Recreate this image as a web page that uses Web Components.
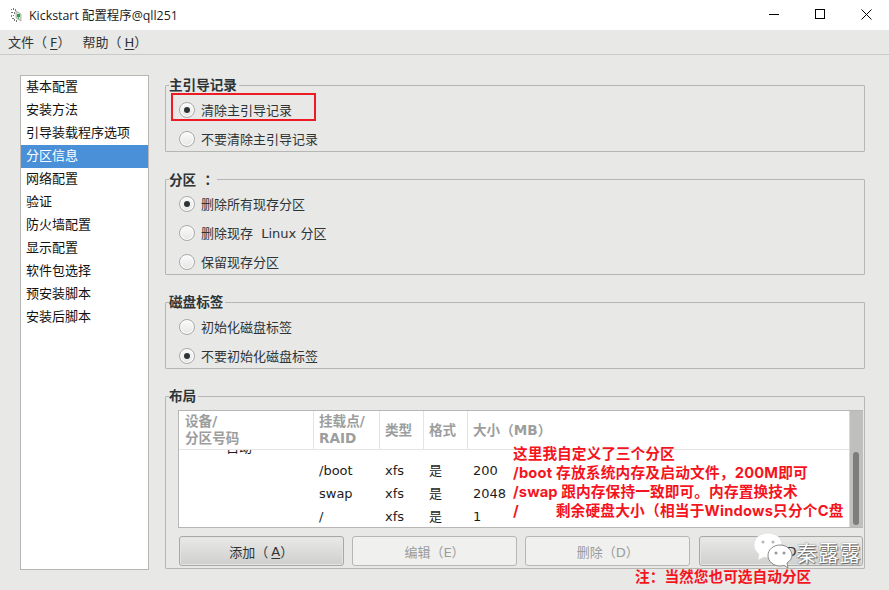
<!DOCTYPE html>
<html>
<head>
<meta charset="utf-8">
<title>Kickstart</title>
<style>
  html, body { margin: 0; padding: 0; }
  body {
    width: 889px;
    height: 590px;
    overflow: hidden;
    background: #e8e8e7;
    font-family: "DejaVu Sans", "Noto Sans CJK SC", sans-serif;
    font-size: 13px;
    color: #2e3436;
  }
  .tc { font-family: "Noto Sans CJK TC", sans-serif; }
</style>
</head>
<body>
<ks-window>
  <ks-sidebar slot="side" selected="3" items="基本配置,安装方法,引导装载程序选项,分区信息,网络配置,验证,防火墙配置,显示配置,软件包选择,预安装脚本,安装后脚本"></ks-sidebar>

  <ks-frame class="a">
    <span slot="legend">主引导记录</span>
    <ks-radio checked>清除主引导记录</ks-radio>
    <ks-radio>不要清除主引导记录</ks-radio>
  </ks-frame>
  <ks-frame class="b">
    <span slot="legend">分区 <span class="tc">：</span></span>
    <ks-radio checked>删除所有现存分区</ks-radio>
    <ks-radio>删除现存&nbsp; Linux 分区</ks-radio>
    <ks-radio>保留现存分区</ks-radio>
  </ks-frame>
  <ks-frame class="c">
    <span slot="legend">磁盘标签</span>
    <ks-radio>初始化磁盘标签</ks-radio>
    <ks-radio checked>不要初始化磁盘标签</ks-radio>
  </ks-frame>
  <ks-frame class="d">
    <span slot="legend">布局</span>
    <ks-layout></ks-layout>
  </ks-frame>
</ks-window>
<ks-notes></ks-notes>

<script>
function defineSimple(name, html, setup) {
  customElements.define(name, class extends HTMLElement {
    constructor() {
      super();
      this.attachShadow({ mode: "open" });
      this.shadowRoot.innerHTML = html;
    }
    connectedCallback() {
      if (setup) setup(this);
    }
  });
}

defineSimple("ks-titlebar", /*html*/ `
  <style>
    :host {
      display: flex;
      align-items: center;
      height: 30px;
      background: #fff;
      color: #1a1a1a;
      font-family: "Open Sans", "Noto Sans CJK SC", sans-serif;
      font-size: 12.4px;
      white-space: nowrap;
    }
    svg.app { margin-left: 10px; margin-right: 7px; flex: none; }
    .title { flex: 1; }
    .ctl { width: 46px; height: 28px; padding-bottom: 2px; display: flex; align-items: center; justify-content: center; }
  </style>
  <svg class="app" width="12" height="16" viewBox="0 0 12 16">
    <path d="M1 2h1v1H1zM3 1h1v2H3zM5 2h1v2H5zM1 5h2v1H1zM4 5h1v2H4zM1 8h1v2H1zM3 8h1v1H3zM2 11h2v1H2zM4 12h1v2H4zM6 13h1v2H6z" fill="#777"/>
    <path d="M6 4l5 3v7l-5-3z" fill="#d6ded6" stroke="#8a8f8a" stroke-width=".6"/>
    <path d="M7 7h3v3H7z" fill="#2f9e44"/>
    <path d="M8 10h1v2H8z" fill="#5bb56a"/>
  </svg>
  <span class="title">Kickstart 配置程序@qll251</span>
  <div class="ctl">
    <svg width="10" height="10"><path d="M0 5.500h10" stroke="#000"/></svg>
  </div>
  <div class="ctl">
    <svg width="10" height="10"><rect x=".5" y=".5" width="9" height="9" fill="none" stroke="#000"/></svg>
  </div>
  <div class="ctl">
    <svg width="11" height="11"><path d="M.5.5l10 10M10.500.5l-10 10" stroke="#000" fill="none"/></svg>
  </div>
`);

defineSimple("ks-menubar", /*html*/ `
  <style>
    :host {
      display: flex;
      align-items: center;
      gap: 12px;
      height: 23px;
      padding: 0 0 1px 8px;
      border-bottom: 1px solid #c9c9c7;
      color: #2e3436;
      font-size: 13px;
      white-space: nowrap;
    }
    u { text-underline-offset: 2px; margin-left: 3px; }
  </style>
  <span>文件（<u>F</u>）</span>
  <span>帮助（<u>H</u>）</span>
`);

defineSimple("ks-window", /*html*/ `
  <style>
    :host { display: block; }
    .body {
      display: flex;
      gap: 16px;
      padding: 20px 24px 0 20px;
    }
    .main {
      flex: 1;
      min-width: 0;
      display: flex;
      flex-direction: column;
    }
    ::slotted(ks-frame.a) { height: 67px; margin-top: 10px; }
    ::slotted(ks-frame.b) { height: 96px; margin-top: 27px; }
    ::slotted(ks-frame.c) { height: 67px; margin-top: 27px; }
    ::slotted(ks-frame.d) { height: 173px; margin-top: 27px; }
  </style>
  <ks-titlebar></ks-titlebar>
  <ks-menubar></ks-menubar>
  <div class="body">
    <slot name="side"></slot>
    <div class="main"><slot></slot></div>
  </div>
`);

defineSimple("ks-sidebar", /*html*/ `
  <style>
    :host {
      display: block;
      flex: none;
      box-sizing: border-box;
      width: 129px;
      height: 495px;
      background: #fff;
      border: 1px solid #b6b6b4;
      color: #111;
      font-size: 13px;
    }
    .row {
      height: 23px;
      line-height: 22px;
      padding-left: 5px;
      white-space: nowrap;
    }
    .row.sel { background: #4a90d9; color: #fff; }
  </style>
  <div class="list"></div>
`, (el) => {
  const list = el.shadowRoot.querySelector(".list");
  const selected = Number(el.getAttribute("selected"));
  el.getAttribute("items").split(",").forEach((text, i) => {
    const row = document.createElement("div");
    row.className = i === selected ? "row sel" : "row";
    row.textContent = text;
    list.append(row);
  });
});

defineSimple("ks-frame", /*html*/ `
  <style>
    :host {
      display: block;
      box-sizing: border-box;
      position: relative;
      border: 1px solid #b6b6b4;
      border-radius: 1px;
      padding: 12px 12px 0 13px;
    }
    .legend {
      position: absolute;
      left: 3px;
      top: -10px;
      padding: 0 2px 0 0;
      height: 18px;
      line-height: 18px;
      background: #e8e8e7;
      font-weight: bold;
      font-size: 13.6px;
      color: #2e3436;
      white-space: nowrap;
    }
    .items { display: flex; flex-direction: column; gap: 6px; }
  </style>
  <div class="legend"><slot name="legend"></slot></div>
  <div class="items"><slot></slot></div>
`);

defineSimple("ks-radio", /*html*/ `
  <style>
    :host {
      display: flex;
      align-items: center;
      gap: 6px;
      height: 23px;
      color: #2e3436;
      font-size: 13px;
      white-space: nowrap;
    }
    .dot {
      flex: none;
      box-sizing: border-box;
      width: 16px;
      height: 16px;
      border-radius: 50%;
      border: 1px solid #a9a9a6;
      background: linear-gradient(#fbfbfb, #e6e6e5);
      box-shadow: inset 0 0 0 1px #fff;
      display: flex;
      align-items: center;
      justify-content: center;
    }
    :host([checked]) .dot::after {
      content: "";
      width: 6px;
      height: 6px;
      border-radius: 50%;
      background: #2e3436;
    }
  </style>
  <span class="dot"></span><span><slot></slot></span>
`);

defineSimple("ks-button", /*html*/ `
  <style>
    :host {
      display: flex;
      align-items: center;
      justify-content: center;
      box-sizing: border-box;
      width: 164.600px;
      height: 30px;
      border: 1px solid #b6b6b4;
      border-radius: 3px;
      background: #f0f0ef;
      color: #9a9c9c;
      font-size: 13px;
      white-space: nowrap;
    }
    :host([active]) {
      color: #2e3436;
      background: linear-gradient(#e9e9e8, #cfcfcd);
      border-color: #a8a8a6;
      box-shadow: inset 0 0 0 1px #e4e4e3;
    }
  </style>
  <slot></slot>
`);

defineSimple("ks-layout", /*html*/ `
  <style>
    :host {
      display: block;
      margin: 1px -12px 0 -1px;
      font-size: 13px;
    }
    .box {
      display: flex;
      box-sizing: border-box;
      height: 118px;
      margin-right: 1px;
      border: 1px solid #b6b6b4;
      border-right: none;
      background: #fff;
    }
    .table { flex: 1; min-width: 0; display: flex; flex-direction: column; }
    .head, .row {
      display: grid;
      grid-template-columns: 135px 66px 44px 44px 1fr;
    }
    .head {
      height: 38px;
      border-bottom: 1px solid #e4e4e3;
      color: #9c9e9e;
      font-weight: bold;
      font-size: 13.6px;
      flex: none;
    }
    .head > div {
      display: flex;
      align-items: center;
      padding-left: 5px;
      line-height: 17px;
      border-right: 1px solid #e4e4e3;
      white-space: pre;
    }
    .head > div:first-child { padding-left: 6px; }
    .head > div:last-child { border-right: none; }
    .rows { flex: 1; overflow: hidden; color: #1c1c1c; }
    .row { height: 23px; line-height: 23px; }
    .row > div { padding-left: 5px; white-space: nowrap; }
    .clip { margin-top: -14px; }
    .clip > div:first-child { padding-left: 47px; }
    .scroll {
      flex: none;
      width: 14px;
      background: #bfbfbd;
      position: relative;
      border-left: 1px solid #d8d8d6;
      box-sizing: border-box;
    }
    .thumb {
      position: absolute;
      left: 3px;
      top: 41px;
      width: 6px;
      height: 73px;
      border-radius: 3px;
      background: #7d7d7b;
    }
    .buttons { display: flex; gap: 8.600px; margin: 8px 0 0 1px; }
    u { text-underline-offset: 2px; margin-left: 3px; }
  </style>
  <div class="box">
    <div class="table">
      <div class="head">
        <div>设备/
分区号码</div>
        <div>挂载点/
RAID</div>
        <div>类型</div>
        <div>格式</div>
        <div>大小（MB）</div>
      </div>
      <div class="rows">
        <div class="row clip"><div>自动</div><div></div><div></div><div></div><div></div></div>
        <div class="row"><div></div><div>/boot</div><div>xfs</div><div>是</div><div>200</div></div>
        <div class="row"><div></div><div>swap</div><div>xfs</div><div>是</div><div>2048</div></div>
        <div class="row"><div></div><div>/</div><div>xfs</div><div>是</div><div>1</div></div>
      </div>
    </div>
    <div class="scroll"><div class="thumb"></div></div>
  </div>
  <div class="buttons">
    <ks-button active>添加（<u>A</u>）</ks-button>
    <ks-button>编辑（E）</ks-button>
    <ks-button>删除（D）</ks-button>
    <ks-button active>RAID</ks-button>
  </div>
`);

// red callouts and watermark pasted on top of the screenshot
defineSimple("ks-notes", /*html*/ `
  <style>
    :host {
      position: absolute;
      left: 0;
      top: 0;
      width: 889px;
      height: 590px;
      pointer-events: none;
      font-family: "Inter", "Noto Sans CJK SC", sans-serif;
    }
    .box {
      position: absolute;
      left: 171px;
      top: 93px;
      width: 141px;
      height: 24px;
      border: 2px solid #ed1c24;
    }
    .red {
      position: absolute;
      color: #f5141e;
      font-weight: bold;
      font-size: 14.7px;
      line-height: 19px;
      white-space: pre;
    }
    .wm {
      position: absolute;
      left: 796px;
      top: 537px;
      font-family: "Noto Sans CJK SC", sans-serif;
      font-size: 21.500px;
      line-height: 30px;
      color: #fff;
      white-space: nowrap;
      text-shadow: 0 0 1px #444, 1px 1px 1px #666;
    }
    svg.chat { position: absolute; left: 752px; top: 532px; }
  </style>
  <div class="box"></div>
  <div class="red" style="left:513px;top:445px"><div>这里我自定义了三个分区</div><div style="letter-spacing:.2px">/boot 存放系统内存及启动文件，200M即可</div><div style="letter-spacing:.1px">/swap 跟内存保持一致即可。内存置换技术</div><div style="letter-spacing:.2px">/          剩余硬盘大小（相当于Windows只分个C盘</div></div>
  <div class="red" style="left:635px;top:568px">注：当然您也可选自动分区</div>
  <svg class="chat" width="44" height="40" viewBox="0 0 44 40">
    <path d="M16 1C8 1 2 6 2 13c0 4 2 7 5 9l-1 6 6-3c1 .4 3 .6 4 .6 8 0 14-5.500 14-12.600S24 1 16 1z" fill="#fff" stroke="#ddd" stroke-width=".7"/>
    <circle cx="11" cy="10" r="1.600" fill="#bbb"/><circle cx="21" cy="10" r="1.600" fill="#bbb"/>
    <path d="M28 13c-7 0-12 5-12 10.500S21 34 28 34c1.500 0 3-.3 4-.7l4 2.700-1-5c3-2 5-4.500 5-7.500C40 18 35 13 28 13z" fill="#fff" stroke="#888" stroke-width="1"/>
    <circle cx="24" cy="21" r="1.500" fill="#999"/><circle cx="32" cy="21" r="1.500" fill="#999"/>
  </svg>
  <div class="wm">秦露露</div>
`);
</script>
</body>
</html>
